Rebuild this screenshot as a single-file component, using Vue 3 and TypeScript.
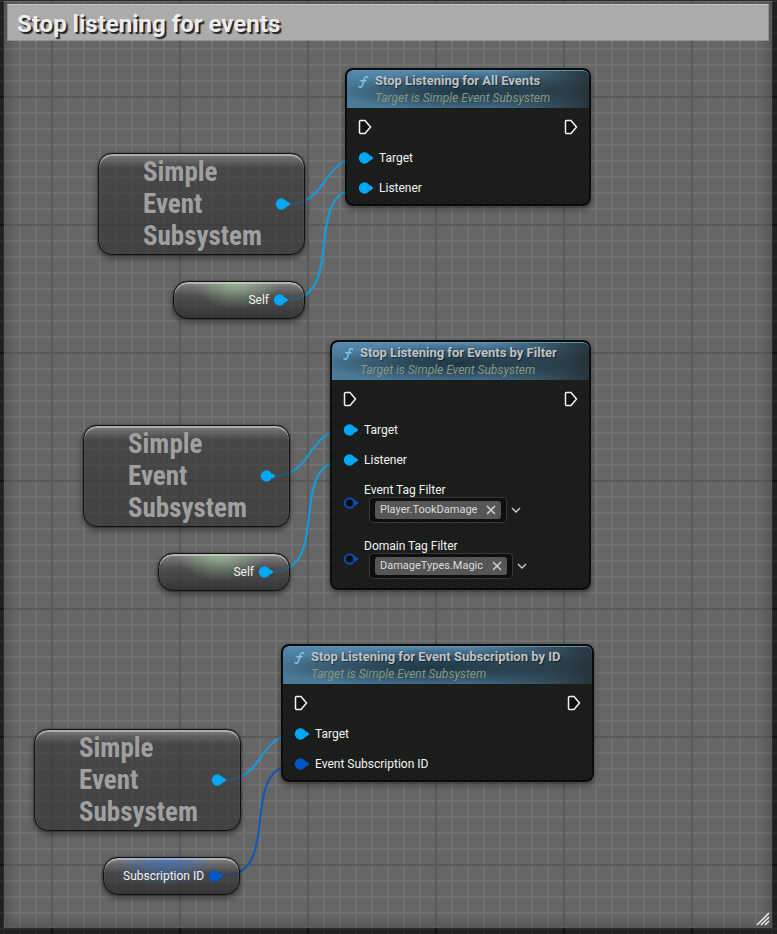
<script setup lang="ts">
interface TagFilter {
  id: string
  label: string
  tag: string
}
interface PinRow {
  label: string
  color: string
}
interface Group {
  id: string
  fn: { x: number; y: number; title: string; pins: PinRow[]; filters: TagFilter[] }
  obj: { x: number; y: number }
  variable: { x: number; y: number; label: string; kind: string; color: string }
}

const OBJECT = '#00a8f6'
const STRUCT = '#0057c8'

const groups: Group[] = [
  {
    id: 'all',
    fn: {
      x: 345,
      y: 68,
      title: 'Stop Listening for All Events',
      pins: [
        { label: 'Target', color: OBJECT },
        { label: 'Listener', color: OBJECT },
      ],
      filters: [],
    },
    obj: { x: 98, y: 153 },
    variable: { x: 173, y: 281, label: 'Self', kind: 'self', color: OBJECT },
  },
  {
    id: 'filter',
    fn: {
      x: 330,
      y: 340,
      title: 'Stop Listening for Events by Filter',
      pins: [
        { label: 'Target', color: OBJECT },
        { label: 'Listener', color: OBJECT },
      ],
      filters: [
        { id: 'event-tag', label: 'Event Tag Filter', tag: 'Player.TookDamage' },
        { id: 'domain-tag', label: 'Domain Tag Filter', tag: 'DamageTypes.Magic' },
      ],
    },
    obj: { x: 83, y: 425 },
    variable: { x: 158, y: 553, label: 'Self', kind: 'self', color: OBJECT },
  },
  {
    id: 'id',
    fn: {
      x: 281,
      y: 644,
      title: 'Stop Listening for Event Subscription by ID',
      pins: [
        { label: 'Target', color: OBJECT },
        { label: 'Event Subscription ID', color: STRUCT },
      ],
      filters: [],
    },
    obj: { x: 34, y: 729 },
    variable: { x: 103, y: 857, label: 'Subscription ID', kind: 'struct', color: STRUCT },
  },
]

const place = (p: { x: number; y: number }) => ({ left: `${p.x}px`, top: `${p.y}px` })

function wire(x1: number, y1: number, x2: number, y2: number, pull: number): string {
  return `M${x1} ${y1}C${x1 + pull} ${y1} ${x2 - pull} ${y2} ${x2} ${y2}`
}

const wires = groups.flatMap((g) => [
  { d: wire(g.obj.x + 190, g.obj.y + 51, g.fn.x + 17, g.fn.y + 90, 42), color: OBJECT },
  { d: wire(g.obj.x + 188, g.obj.y + 147, g.fn.x + 17, g.fn.y + 120, 64), color: g.variable.color },
])
</script>

<template>
  <main class="graph">
    <section class="comment">
      <h1 class="comment-title">Stop listening for events</h1>
      <svg class="grip" viewBox="0 0 14 14" aria-hidden="true">
        <path d="M1 13 13 1M5 13 13 5M9 13 13 9" />
      </svg>
    </section>

    <svg class="wires" aria-hidden="true">
      <path v-for="(w, i) in wires" :key="i" :d="w.d" :stroke="w.color" />
    </svg>

    <template v-for="g in groups" :key="g.id">
      <article class="fn-node" :style="place(g.fn)">
        <header class="fn-head">
          <svg class="fn-icon" viewBox="0 0 12 14" aria-hidden="true">
            <path d="M10.600 2.600C10.200 1.200 8.300 1.200 7.500 3.200C6.800 5 6.200 8.500 5.300 10.600C4.500 12.500 2.600 12.700 1.800 11.600M3.800 5.800H9" />
          </svg>
          <div>
            <h2 class="fn-title">{{ g.fn.title }}</h2>
            <p class="fn-sub">Target is Simple Event Subsystem</p>
          </div>
        </header>
        <div class="fn-body">
          <div class="exec-row">
            <svg v-for="n in 2" :key="n" class="exec" viewBox="0 0 14 16" aria-hidden="true">
              <path d="M2.500 1.500H7L12.500 8L7 14.500H2.500Q1.500 14.500 1.500 13.500V2.500Q1.500 1.500 2.500 1.500Z" />
            </svg>
          </div>
          <div v-for="p in g.fn.pins" :key="p.label" class="pin-row">
            <svg class="pin" viewBox="0 0 16 12" aria-hidden="true">
              <path d="M12 3 15.500 6 12 9Z" :fill="p.color" />
              <circle cx="6.500" cy="6" r="5.700" :fill="p.color" />
            </svg>
            <span>{{ p.label }}</span>
          </div>
          <div v-for="f in g.fn.filters" :key="f.id" class="filter-row">
            <svg class="pin" viewBox="0 0 16 12" aria-hidden="true">
              <path d="M12 3 15.500 6 12 9Z" fill="#0a50b4" />
              <circle cx="6.500" cy="6" r="4.700" fill="#080d14" stroke="#0a50b4" stroke-width="2" />
            </svg>
            <div class="filter">
              <span :id="f.id" class="filter-label">{{ f.label }}</span>
              <div class="filter-edit" role="group" :aria-labelledby="f.id">
                <div class="tag-box">
                  <span class="chip">
                    {{ f.tag }}
                    <button type="button" class="icon-btn" aria-label="Remove tag">
                      <svg class="cross" viewBox="0 0 10 10" aria-hidden="true"><path d="M1 1 9 9M9 1 1 9" /></svg>
                    </button>
                  </span>
                </div>
                <button type="button" class="icon-btn" aria-label="Choose tag">
                  <svg class="chevron" viewBox="0 0 10 8" aria-hidden="true"><path d="M1 2 5 6 9 2" /></svg>
                </button>
              </div>
            </div>
          </div>
        </div>
      </article>

      <article class="obj-node" :style="place(g.obj)">
        <span class="obj-name">Simple<br />Event<br />Subsystem</span>
        <svg class="pin" viewBox="0 0 16 12" aria-hidden="true">
          <path d="M12 3 15.500 6 12 9Z" :fill="OBJECT" />
          <circle cx="6.500" cy="6" r="5.700" :fill="OBJECT" />
        </svg>
      </article>

      <article class="var-node" :class="g.variable.kind" :style="place(g.variable)">
        <span>{{ g.variable.label }}</span>
        <svg class="pin" viewBox="0 0 16 12" aria-hidden="true">
          <path d="M12 3 15.500 6 12 9Z" :fill="g.variable.color" />
          <circle cx="6.500" cy="6" r="5.700" :fill="g.variable.color" />
        </svg>
      </article>
    </template>
  </main>
</template>

<style>
body {
  margin: 0;
  background: #202020;
}
</style>

<style scoped>
.graph {
  position: relative;
  box-sizing: border-box;
  display: flex;
  min-height: 100vh;
  padding: 1px 5px 6px 4px;
  overflow: hidden;
  font-family: Roboto, 'Liberation Sans', sans-serif;
  font-size: 12px;
  line-height: 16px;
  color: #f2f2f2;
  background:
    linear-gradient(90deg, #121212 2px, transparent 2px) 51px 0 / 128px 100%,
    linear-gradient(#121212 2px, transparent 2px) 0 96px / 100% 128px,
    linear-gradient(90deg, #2b2b2b 2px, transparent 2px) 3px 0 / 16px 100%,
    linear-gradient(#2b2b2b 2px, transparent 2px) 0 0 / 100% 16px,
    #202020;
}

.comment {
  position: relative;
  flex: 1;
  box-sizing: border-box;
  padding: 2px;
  border: 1px solid #5a5a5a;
  border-top-color: #6a6a6a;
  box-shadow: inset 0 0 14px rgba(30, 30, 30, 0.4);
  background:
    linear-gradient(90deg, #5a5a5a 2px, transparent 2px) 46px 0 / 128px 100%,
    linear-gradient(#5a5a5a 2px, transparent 2px) 0 94px / 100% 128px,
    linear-gradient(90deg, #717171 2px, transparent 2px) 14px 0 / 16px 100%,
    linear-gradient(#717171 2px, transparent 2px) 0 14px / 100% 16px,
    #666;
}

.comment-title {
  margin: 0;
  padding: 5px 9px 2px;
  border: 1px solid #909090;
  border-top-color: #c4c4c4;
  font-size: 24px;
  line-height: 28px;
  font-weight: 700;
  color: #ececec;
  text-shadow: 2px 2px 1px #222;
  background: #ababab;
}

.grip {
  position: absolute;
  right: 1px;
  bottom: 1px;
  width: 14px;
  height: 14px;
  fill: none;
  stroke: #f0f0f0;
  stroke-width: 1.5;
}

.wires {
  position: absolute;
  inset: 0;
  width: 100%;
  height: 100%;
  fill: none;
  stroke-width: 2;
  opacity: 0.85;
}

.pin {
  flex: none;
  width: 16px;
  height: 12px;
}

.fn-node {
  position: absolute;
  box-sizing: border-box;
  min-width: 246px;
  border: 2px solid #0b0c0c;
  border-radius: 8px;
  overflow: hidden;
  background: rgba(19, 21, 19, 0.9);
  box-shadow: 0 3px 6px rgba(0, 0, 0, 0.45);
}

.fn-head {
  display: flex;
  gap: 6px;
  padding: 1px 32px 1px 10px;
  border-top: 1px solid #5e93b8;
  border-radius: 6px 6px 0 0;
  background:
    linear-gradient(90deg, transparent 60%, rgba(31, 38, 41, 0.8) 98%),
    radial-gradient(ellipse 52% 56% at 50% 56%, rgba(24, 42, 54, 0.85), rgba(24, 42, 54, 0.55) 45%, transparent),
    linear-gradient(#5488ab, #48748f 50%, #4b7c9c);
}

.fn-icon {
  flex: none;
  width: 12px;
  height: 14px;
  margin-top: 3px;
  fill: none;
  stroke: #78c6f5;
  stroke-width: 1.5;
  stroke-linecap: round;
}

.fn-title,
.fn-sub {
  margin: 0;
  white-space: nowrap;
}

.fn-title {
  font-size: 13px;
  line-height: 17px;
  font-weight: 700;
  color: #bfc3c6;
  text-shadow: 1px 1px 1px rgba(0, 0, 0, 0.5);
}

.fn-sub {
  font-size: 12px;
  line-height: 18px;
  font-style: italic;
  color: #87977c;
}

.fn-body {
  padding: 4px 11px 1px;
}

.exec-row {
  display: flex;
  justify-content: space-between;
  align-items: center;
  height: 30px;
  margin-bottom: 1px;
}

.exec {
  width: 14px;
  height: 16px;
  fill: #101210;
  stroke: #f2f2f2;
  stroke-width: 1.5;
}

.pin-row {
  display: flex;
  align-items: center;
  gap: 5px;
  height: 30px;
}

.filter-row {
  box-sizing: border-box;
  display: flex;
  align-items: center;
  gap: 5px;
  height: 56px;
}

.filter-label {
  display: block;
  line-height: 14px;
}

.filter-edit {
  display: flex;
  align-items: center;
  gap: 4px;
  padding-left: 5px;
}

.tag-box {
  padding: 3px 5px;
  border: 1px solid #363836;
  border-radius: 4px;
  background: #0d0e0d;
}

.chip {
  display: flex;
  align-items: center;
  gap: 9px;
  height: 18px;
  padding: 0 5px;
  border-radius: 3px;
  font-size: 11px;
  color: #dcdcdc;
  background: #565656;
}

.icon-btn {
  display: flex;
  padding: 0;
  border: 0;
  background: none;
  cursor: pointer;
}

.cross {
  width: 10px;
  height: 10px;
  fill: none;
  stroke: #d0d0d0;
  stroke-width: 1.5;
}

.chevron {
  width: 10px;
  height: 8px;
  fill: none;
  stroke: #c8c8c8;
  stroke-width: 1.5;
}

.obj-node,
.var-node {
  position: absolute;
  box-sizing: border-box;
  display: flex;
  align-items: center;
  border: 1px solid #101010;
  box-shadow:
    0 0 1px #000,
    0 3px 6px rgba(0, 0, 0, 0.5),
    inset 0 2px 1px rgba(225, 225, 225, 0.55);
}

.obj-node {
  justify-content: space-between;
  width: 207px;
  height: 102px;
  padding: 0 13px 0 44px;
  border-radius: 14px;
  background: linear-gradient(rgba(130, 130, 130, 0.7), rgba(52, 52, 52, 0.62) 14%, rgba(42, 43, 42, 0.62));
}

.obj-name {
  font-family: 'Roboto Condensed', Roboto, 'Liberation Sans', sans-serif;
  font-size: 27px;
  line-height: 32px;
  font-weight: 700;
  color: #a0a0a0;
}

.var-node {
  justify-content: flex-end;
  gap: 4px;
  min-width: 132px;
  height: 38px;
  padding: 0 15px 0 19px;
  border-radius: 15px;
}

.var-node.self {
  background:
    radial-gradient(ellipse 34% 75% at 48% 0, rgba(160, 195, 155, 0.75), transparent),
    linear-gradient(rgba(140, 140, 140, 0.75), rgba(66, 66, 66, 0.7) 40%, rgba(34, 34, 34, 0.7));
}

.var-node.struct {
  background:
    radial-gradient(ellipse 38% 80% at 46% 0, rgba(62, 112, 190, 0.8), transparent),
    linear-gradient(rgba(140, 140, 140, 0.75), rgba(60, 61, 64, 0.7) 40%, rgba(34, 34, 34, 0.7));
}
</style>
